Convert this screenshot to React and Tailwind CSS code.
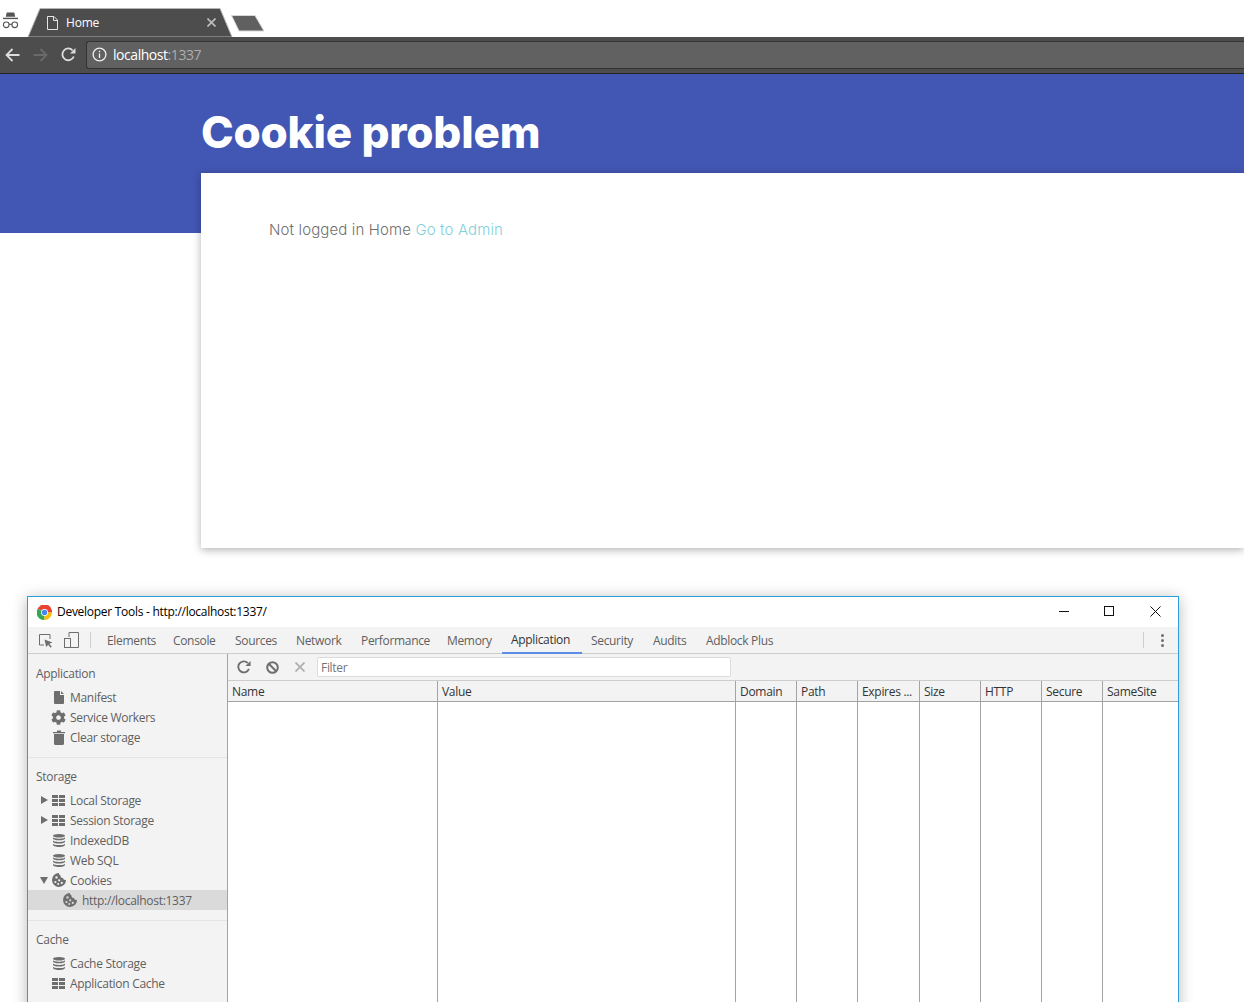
import React from "react";
import { FaCog } from "react-icons/fa";

const ui = "font-['Open_Sans','Noto_Sans',sans-serif]";

const GridIcon = () => (
  <svg width="13" height="11" viewBox="0 0 13 11" fill="#6e6e6e">
    <rect x="0" y="0" width="6" height="3" /><rect x="7" y="0" width="6" height="3" />
    <rect x="0" y="4" width="6" height="3" /><rect x="7" y="4" width="6" height="3" />
    <rect x="0" y="8" width="6" height="3" /><rect x="7" y="8" width="6" height="3" />
  </svg>
);
const FileIcon = () => (
  <svg width="10" height="13" viewBox="0 0 10 13" fill="#6e6e6e"><path d="M0 1q0-1 1-1h5v4h4v8q0 1-1 1H1q-1 0-1-1zM7 0l3 3H7z" /></svg>
);
const TrashIcon = () => (
  <svg width="12" height="15" viewBox="0 0 12 15" fill="#6e6e6e"><path d="M0 2h4V0.600h4V2h4v1.200H0zM1 4h10v9.500q0 1.500-1.500 1.500h-7Q1 15 1 13.500z" /></svg>
);
const DbIcon = () => (
  <svg width="12" height="13" viewBox="0 0 12 13" fill="#6e6e6e">
    <ellipse cx="6" cy="1.800" rx="6" ry="1.800" />
    <path d="M0 3v1.500C0 5.500 2.700 6.300 6 6.300s6-.8 6-1.800V3C12 4 9.300 4.700 6 4.700S0 4 0 3z" />
    <path d="M0 6.200v1.500C0 8.700 2.700 9.500 6 9.500s6-.8 6-1.800V6.200C12 7.200 9.300 7.900 6 7.900S0 7.200 0 6.200z" />
    <path d="M0 9.400v1.600c0 1 2.700 2 6 2s6-1 6-2V9.400c0 1-2.700 1.700-6 1.700S0 10.400 0 9.400z" />
  </svg>
);
const CookieIcon = () => (
  <svg width="14" height="14" viewBox="0 0 14 14">
    <path fillRule="evenodd" fill="#6e6e6e" d="M7 0a2 2 0 0 0 1.500 2.300A2.400 2.400 0 0 0 11 5a2.300 2.300 0 0 0 3 1.800A7 7 0 1 1 7 0zM4.500 3.200a1.200 1.200 0 1 0 0 2.400 1.200 1.200 0 0 0 0-2.400zM7.200 6.200a1.100 1.100 0 1 0 0 2.200 1.100 1.100 0 0 0 0-2.200zM3.400 7.900a1.100 1.100 0 1 0 0 2.200 1.100 1.100 0 0 0 0-2.200zM9.800 8.800a1.100 1.100 0 1 0 0 2.200 1.100 1.100 0 0 0 0-2.200zM6.200 10.100a1 1 0 1 0 0 2 1 1 0 0 0 0-2z" />
  </svg>
);

const Row = ({ icon, label, arrow, selected, indent }) => (
  <div className={`flex h-5 items-center ${selected ? "bg-[#dadada]" : ""}`}>
    <div className={`flex h-5 items-center ${indent ? "w-[32px]" : "w-[21px]"} justify-end shrink-0`}>
      {arrow === "r" && <span className="mr-[1px] h-0 w-0 border-y-[4.5px] border-l-[7px] border-y-transparent border-l-[#6e6e6e]" />}
      {arrow === "d" && <span className="mr-[1px] h-0 w-0 border-x-[4.5px] border-t-[7px] border-x-transparent border-t-[#6e6e6e]" />}
    </div>
    <div className="flex w-[19px] shrink-0 justify-center">{icon}</div>
    <span className={`${indent ? "pl-[3px]" : "pl-[2px]"} pt-[2px] text-[12px] tracking-[-0.3px] text-[#5f5f5f]`}>{label}</span>
  </div>
);

const Section = ({ title, first, last, children }) => (
  <div className={`${first ? "pt-[10px]" : "pt-[9px]"} pb-[10px] ${last ? "" : "border-b border-[#e4e4e4]"}`}>
    <div className="mb-[3px] flex h-5 items-center pl-2 text-[12px] tracking-[-0.3px] text-[#5f5f5f]">{title}</div>
    {children}
  </div>
);

const tabs = [["Elements", 66], ["Console", 62], ["Sources", 61], ["Network", 65], ["Performance", 86], ["Memory", 64], ["Application", 80], ["Security", 62], ["Audits", 53], ["Adblock Plus", 80]];
const cols = [["Name", 210], ["Value", 298], ["Domain", 61], ["Path", 61], ["Expires ...", 62], ["Size", 61], ["HTTP", 61], ["Secure", 61], ["SameSite", 75]];

export default function App() {
  return (
    <div className={`h-[1002px] w-[1244px] overflow-hidden bg-white ${ui}`}>
      {/* tab strip */}
      <div className="relative flex h-[37px] items-start">
        <svg className="ml-[2px] mt-[12px] shrink-0" width="17" height="19" viewBox="0 0 18 19" fill="#555">
          <path d="M5 0h8l1 4.500H4z" />
          <rect x="1" y="5.500" width="16" height="1.500" />
          <g fill="none" stroke="#555" strokeWidth="1.200"><circle cx="4.500" cy="13" r="3" /><circle cx="13.500" cy="13" r="3" /><path d="M7.500 12.500h3" /></g>
        </svg>
        <div className="absolute left-[27px] top-[8px] h-[29px] w-[206px]">
          <svg className="absolute inset-0" width="206" height="29" viewBox="0 0 206 29">
            <path d="M1 29L13 .5H193L205 29Z" fill="#4d4d4d" stroke="#b4b4b4" strokeWidth="1" />
          </svg>
          <svg className="absolute left-[20px] top-[8px]" width="11" height="14" viewBox="0 0 11 14" fill="none" stroke="#e4e4e4" strokeWidth="1"><path d="M.5.5h6.500l3.500 3.500v9.500h-10zM6.500.5v4h4" /></svg>
          <span className="absolute left-[39px] top-[6px] text-[12px] leading-[18px] tracking-[-0.2px] text-white">Home</span>
          <svg className="absolute left-[180px] top-[10px]" width="9" height="9" viewBox="0 0 9 9" stroke="#bdbdbd" strokeWidth="1.600"><path d="M.5.5l8 8M8.500.5l-8 8" /></svg>
        </div>
        <svg className="absolute left-[230px] top-[14px]" width="36" height="18" viewBox="0 0 36 18"><path d="M1.500 1.500H25L34 17H9Z" fill="#606060" stroke="#d8d8d8" strokeWidth="1" /></svg>
      </div>
      {/* toolbar */}
      <div className="flex h-[37px] items-center border-b border-[#222] bg-[#4d4d4d] pb-[1px]">
        <svg className="ml-[5px]" width="15" height="14" viewBox="0 0 15 14" fill="none" stroke="#dcdcdc" strokeWidth="1.800"><path d="M14.500 7H1.500M7.500 1L1.500 7l6 6" /></svg>
        <svg className="ml-[13px]" width="15" height="14" viewBox="0 0 15 14" fill="none" stroke="#6a6a6a" strokeWidth="1.800"><path d="M.5 7h13M7.500 1l6 6-6 6" /></svg>
        <svg className="ml-[13px]" width="15" height="15" viewBox="0 0 15 15" fill="none" stroke="#dcdcdc" strokeWidth="1.800"><path d="M12.800 9.500A5.900 5.900 0 1 1 11.600 3.300" /><path d="M14.500 1v5.500H9z" fill="#dcdcdc" stroke="none" /></svg>
        <div className="ml-[10px] flex h-[28px] flex-1 items-center rounded-l-[3px] border-y border-l border-[#333] bg-[#616161] pl-[5px]">
          <svg width="15" height="15" viewBox="0 0 15 15" fill="none" stroke="#f0f0f0" strokeWidth="1.300"><circle cx="7.500" cy="7.500" r="6.400" /><path d="M7.500 6.500v4.500M7.500 3.800v1.500" /></svg>
          <span className="ml-[6px] text-[14px] tracking-[-0.45px] text-white">localhost<span className="text-[#adadad]">:1337</span></span>
        </div>
      </div>
      {/* hero */}
      <div className="h-[159px] bg-[#4257b3] pl-[201px] pt-[27px]">
        <h1 className="font-['Inter',sans-serif] text-[44px] font-extrabold leading-[62px] tracking-[-0.2px] text-white">Cookie problem</h1>
      </div>
      {/* card */}
      <div className="relative -mt-[60px] ml-[201px] h-[375px] bg-white pl-[68px] pt-[46px] shadow-[0_2px_8px_rgba(0,0,0,0.3)]">
        <p className="font-['Inter',sans-serif] text-[15px] font-light leading-[22px] tracking-[0.13px] text-[#6f6f6f]">Not logged in Home <span className="text-[#84d0da]">Go to Admin</span></p>
      </div>
      {/* devtools */}
      <div className="relative ml-[27px] mt-[48px] h-[420px] w-[1152px] border border-[#2a9fdf] bg-white shadow-[0_2px_14px_rgba(0,0,0,0.28)]">
        <div className="flex h-[30px] items-center">
          <svg className="ml-[9px]" width="15" height="15" viewBox="0 0 48 48">
            <path d="M24 24L10.900 1.300 A24 24 0 0 1 48 24Z" fill="#ea4335" />
            <path d="M24 24L2 12A24 24 0 0 1 24 0Z" fill="#ea4335" />
            <path d="M24 24L24 48A24 24 0 0 1 2 12Z" fill="#34a853" />
            <path d="M24 24L48 24A24 24 0 0 1 24 48Z" fill="#fbbc05" />
            <circle cx="24" cy="24" r="11" fill="#fff" /><circle cx="24" cy="24" r="8.500" fill="#4285f4" />
          </svg>
          <span className="ml-[5px] text-[12px] tracking-[-0.28px] text-black">Developer Tools - http://localhost:1337/</span>
          <div className="ml-auto mb-[2px] flex items-center">
            <svg width="10" height="10" viewBox="0 0 10 10" stroke="#111" strokeWidth="1"><path d="M0 5.500h10" /></svg>
            <svg className="ml-[35px]" width="10" height="10" viewBox="0 0 10 10" fill="none" stroke="#111" strokeWidth="1"><rect x=".5" y=".5" width="9" height="9" /></svg>
            <svg className="ml-[36px] mr-[17px]" width="11" height="11" viewBox="0 0 11 11" stroke="#111" strokeWidth="1"><path d="M.5.5l10 10M10.500.5l-10 10" /></svg>
          </div>
        </div>
        {/* tabs */}
        <div className="flex h-[27px] items-center border-b border-[#cdcdcd] bg-[#f3f3f3]">
          <svg className="ml-[10px]" width="15" height="15" viewBox="0 0 15 15" fill="none"><path d="M6 12H1.500V1.500H12V6" stroke="#6e6e6e" strokeWidth="1" /><path d="M6.500 6.500l8 3-3.200 1.200 2.500 3-1.300 1-2.300-3-2 2.300z" fill="#6e6e6e" /></svg>
          <svg className="ml-[11px]" width="15" height="16" viewBox="0 0 15 16" fill="none" stroke="#6e6e6e" strokeWidth="1"><path d="M5 5V.5h9.500v15H6" /><rect x=".5" y="6.500" width="6" height="9" /></svg>
          <div className="ml-[11px] h-[16px] w-px bg-[#cfcfcf]" />
          <div className="ml-[7px] flex h-full">
            {tabs.map(([t, w]) => (
              <div key={t} style={{ width: w }} className={`flex h-[27px] items-center whitespace-nowrap pl-[9px] pt-[1px] text-[12px] tracking-[-0.33px] ${t === "Application" ? "border-b-2 border-[#5a8ee6] text-[#333]" : "text-[#5f5f5f]"}`}>{t}</div>
            ))}
          </div>
          <div className="ml-auto h-[16px] w-px bg-[#cfcfcf]" />
          <div className="ml-[17px] mr-[14px] flex flex-col gap-[2px]">
            <span className="h-[3px] w-[3px] rounded-full bg-[#6e6e6e]" /><span className="h-[3px] w-[3px] rounded-full bg-[#6e6e6e]" /><span className="h-[3px] w-[3px] rounded-full bg-[#6e6e6e]" />
          </div>
        </div>
        <div className="flex h-[400px]">
          {/* sidebar */}
          <div className="w-[200px] shrink-0 border-r border-[#a3a3a3] bg-[#f3f3f3]">
            <Section title="Application" first>
              <Row icon={<FileIcon />} label="Manifest" />
              <Row icon={<FaCog size={15} color="#6e6e6e" />} label="Service Workers" />
              <Row icon={<TrashIcon />} label="Clear storage" />
            </Section>
            <Section title="Storage">
              <Row icon={<GridIcon />} label="Local Storage" arrow="r" />
              <Row icon={<GridIcon />} label="Session Storage" arrow="r" />
              <Row icon={<DbIcon />} label="IndexedDB" />
              <Row icon={<DbIcon />} label="Web SQL" />
              <Row icon={<CookieIcon />} label="Cookies" arrow="d" />
              <Row icon={<CookieIcon />} label="http://localhost:1337" selected indent />
            </Section>
            <Section title="Cache" last>
              <Row icon={<DbIcon />} label="Cache Storage" />
              <Row icon={<GridIcon />} label="Application Cache" />
            </Section>
          </div>
          {/* main */}
          <div className="flex-1">
            <div className="flex h-[27px] items-center border-b border-[#cdcdcd] bg-[#f3f3f3]">
              <svg className="ml-[9px]" width="14" height="14" viewBox="0 0 15 15" fill="none" stroke="#6e6e6e" strokeWidth="2"><path d="M12.800 9.500A5.900 5.900 0 1 1 11.600 3.300" /><path d="M14.500 1v5.500H9z" fill="#6e6e6e" stroke="none" /></svg>
              <svg className="ml-[15px]" width="13" height="13" viewBox="0 0 13 13" fill="none" stroke="#6e6e6e" strokeWidth="2"><circle cx="6.500" cy="6.500" r="5.300" /><path d="M2.800 2.800l7.400 7.400" /></svg>
              <svg className="ml-[16px]" width="10" height="10" viewBox="0 0 10 10" stroke="#b0b0b0" strokeWidth="1.800"><path d="M.5.500l9 9M9.500.500l-9 9" /></svg>
              <div className="ml-[12px] flex h-[20px] w-[414px] items-center rounded-[2px] border border-[#dcdcdc] bg-white pl-[3px] pt-[1px] text-[12px] tracking-[-0.3px] text-[#757575]">Filter</div>
            </div>
            <div className="flex h-[21px] border-b border-[#a3a3a3] bg-[#f3f3f3]">
              {cols.map(([t, w]) => (
                <div key={t} style={{ width: w }} className="flex items-center whitespace-nowrap border-r border-[#a3a3a3] pl-1 pt-[2px] text-[12px] tracking-[-0.3px] text-[#333] last:border-r-0">{t}</div>
              ))}
            </div>
            <div className="flex h-[320px]">
              {cols.map(([t, w]) => (
                <div key={t} style={{ width: w }} className="border-r border-[#a3a3a3] last:border-r-0" />
              ))}
            </div>
          </div>
        </div>
      </div>
    </div>
  );
}
